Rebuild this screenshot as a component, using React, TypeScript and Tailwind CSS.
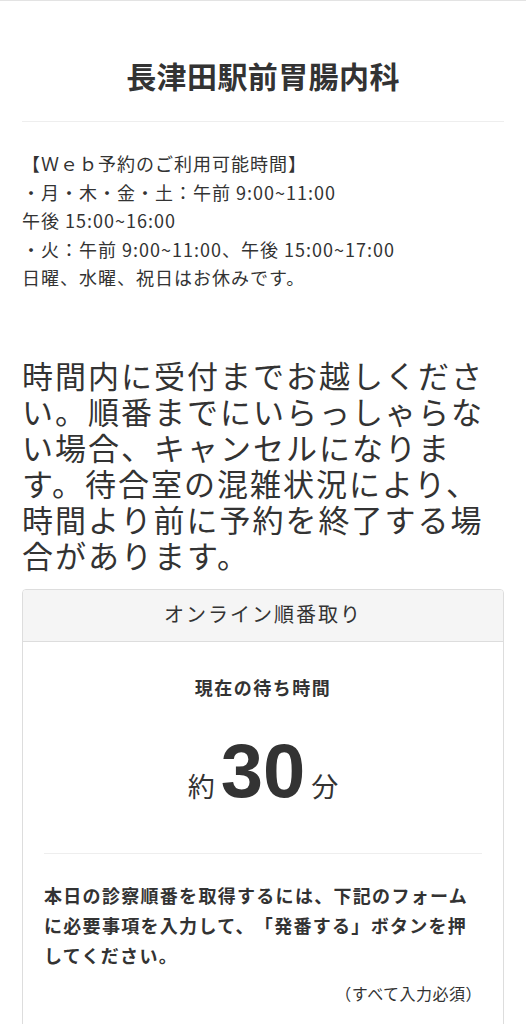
import React from "react";

const font = '"Noto Sans CJK JP", "Noto Sans", sans-serif';

export default function App() {
  return (
    <div
      className="min-h-screen border-t border-[#e3e3e3] bg-white text-[#333] [text-spacing-trim:space-all]"
      style={{ fontFamily: font }}
    >
      <div className="px-[22px]">
        <h1 className="pb-[24px] pt-[52px] text-center text-[30px] font-bold leading-[44px] tracking-[0.4px]">
          長津田駅前胃腸内科
        </h1>
        <hr className="border-0 border-t border-[#eeeeee]" />

        <div className="mt-[27px] text-[18px] leading-[28.5px] tracking-[1px]">
          【Ｗｅｂ予約のご利用可能時間】
          <br />
          ・月・木・金・土：午前 9:00~11:00
          <br />
          午後 15:00~16:00
          <br />
          ・火：午前 9:00~11:00、午後 15:00~17:00
          <br />
          日曜、水曜、祝日はお休みです。
        </div>

        <p className="mt-[65px] text-[31px] leading-[36px] tracking-[2px]">
          時間内に受付までお越しください。順番までにいらっしゃらない場合、キャンセルになります。待合室の混雑状況により、時間より前に予約を終了する場合があります。
        </p>

        <section className="mt-[16px] overflow-hidden rounded-[4px] border border-[#dddddd]">
          <div className="border-b border-[#dddddd] bg-[#f5f5f5] pb-[13px] pt-[10px] text-center text-[20px] leading-[28px] tracking-[2px]">
            オンライン順番取り
          </div>

          <div className="px-[21px] pb-[40px]">
            <h2 className="pt-[32px] text-center text-[18px] font-bold leading-[26px] tracking-[1.5px]">
              現在の待ち時間
            </h2>

            <div className="mt-[33px] flex items-baseline justify-center gap-[6px]">
              <span className="text-[27px] leading-none">約</span>
              <span
                className="text-[76px] font-bold leading-none"
                style={{ fontFamily: '"Liberation Sans", Arial, sans-serif' }}
              >
                30
              </span>
              <span className="text-[27px] leading-none">分</span>
            </div>

            <hr className="mt-[44px] border-0 border-t border-[#eeeeee]" />

            <p className="mt-[26px] text-[18px] font-bold leading-[30px] tracking-[1.3px]">
              本日の診察順番を取得するには、下記のフォームに必要事項を入力して、「発番する」ボタンを押してください。
            </p>

            <p className="mt-[11px] text-right text-[16px] leading-[24px] tracking-[0.5px]">
              （すべて入力必須）
            </p>
          </div>
        </section>
      </div>
    </div>
  );
}
